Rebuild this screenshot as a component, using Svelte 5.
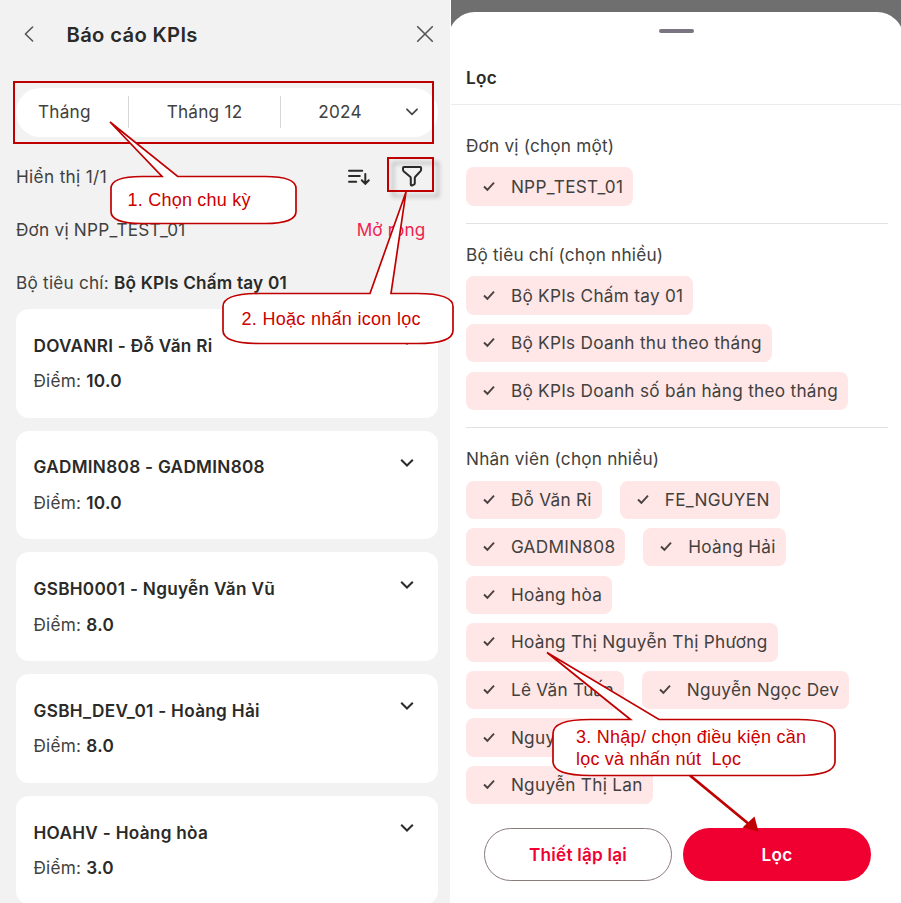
<script>
  const cards = [
    { name: 'DOVANRI - Đỗ Văn Ri', score: '10.0' },
    { name: 'GADMIN808 - GADMIN808', score: '10.0' },
    { name: 'GSBH0001 - Nguyễn Văn Vũ', score: '8.0' },
    { name: 'GSBH_DEV_01 - Hoàng Hải', score: '8.0' },
    { name: 'HOAHV - Hoàng hòa', score: '3.0' }
  ];

  const sections = [
    { title: 'Đơn vị (chọn một)', rows: [['NPP_TEST_01']] },
    {
      title: 'Bộ tiêu chí (chọn nhiều)',
      rows: [['Bộ KPIs Chấm tay 01'], ['Bộ KPIs Doanh thu theo tháng'], ['Bộ KPIs Doanh số bán hàng theo tháng']]
    },
    {
      title: 'Nhân viên (chọn nhiều)',
      rows: [
        ['Đỗ Văn Ri', 'FE_NGUYEN'],
        ['GADMIN808', 'Hoàng Hải'],
        ['Hoàng hòa'],
        ['Hoàng Thị Nguyễn Thị Phương'],
        ['Lê Văn Tuấn', 'Nguyễn Ngọc Dev'],
        ['Nguyễn'],
        ['Nguyễn Thị Lan']
      ]
    }
  ];
</script>

<div class="page">
  <section class="report">
    <header class="topbar">
      <svg width="12" height="18" viewBox="0 0 12 18"><path d="M9.6 2 2.4 9l7.2 7" /></svg>
      <h1>Báo cáo KPIs</h1>
      <svg width="18" height="18" viewBox="0 0 18 18"><path d="m1.7 1.7 14.6 14.6M16.3 1.7 1.7 16.3" /></svg>
    </header>

    <div class="period">
      <span class="type">Tháng</span>
      <span class="month">Tháng 12</span>
      <span class="year">2024</span>
      <svg width="12" height="8" viewBox="0 0 12 8"><path d="m1 1.3 5 5 5-5" /></svg>
    </div>

    <div class="row count">
      <span>Hiển thị 1/1</span>
      <div class="tools">
        <svg width="24" height="20" viewBox="0 0 24 20">
          <path d="M2 3.7h13.2M2 9.100h10.800M2 14.700h7.200M18.3 7v9.600M14.800 13.200l3.500 3.700 3.500-3.700" />
        </svg>
        <svg width="22" height="22" viewBox="0 0 22 22">
          <path d="M2.9 1h16.2q1 0 1 1v1.500q0 .9-.6 1.600l-5.200 5.600q-.5.6-.5 1.400v5.200q0 .7-.6 1l-1.900 1q-1.500.6-1.500-.9v-6.200q0-.8-.6-1.500L2.600 5.200Q2 4.500 2 3.600V2q0-1 .9-1z" />
        </svg>
      </div>
    </div>
    <div class="row unit"><span>Đơn vị NPP_TEST_01</span><a>Mở rộng</a></div>
    <div class="row set"><span>Bộ tiêu chí: <b>Bộ KPIs Chấm tay 01</b></span></div>

    <div class="cards">
      {#each cards as card}
        <article>
          <div class="lines">
            <h2>{card.name}</h2>
            <p>Điểm: <b>{card.score}</b></p>
          </div>
          <svg width="14" height="10" viewBox="0 0 14 10"><path d="m1.2 1.7 5.8 5.800 5.800-5.800" /></svg>
        </article>
      {/each}
    </div>
  </section>

  <section class="filter">
    <div class="sheet">
      <div class="grip"></div>
      <h3>Lọc</h3>
      <div class="groups">
        {#each sections as s}
          <div class="group">
            <h4>{s.title}</h4>
            {#each s.rows as row}
              <div class="chips">
                {#each row as label}
                  <span class="chip">
                    <svg width="12" height="10" viewBox="0 0 12 10"><path d="m1 4.500 3.400 3.300L11 .7" /></svg>{label}
                  </span>
                {/each}
              </div>
            {/each}
          </div>
        {/each}
      </div>
      <footer>
        <button class="reset">Thiết lập lại</button>
        <button class="apply">Lọc</button>
      </footer>
    </div>
  </section>

  <svg class="notes" width="901" height="903" viewBox="0 0 901 903">
    <defs>
      <filter id="shade" x="-30%" y="-30%" width="180%" height="180%">
        <feDropShadow dx="5" dy="5" stdDeviation="2" flood-color="#000" flood-opacity="0.28" />
      </filter>
    </defs>
    <rect class="frame" x="14" y="82" width="419" height="61" />
    <rect class="frame" x="388" y="158" width="45" height="33" filter="url(#shade)" />
    <path class="bubble" d="M142 176.500H162L110 122l67.700 54.500H265q31 0 31 12V211.500q0 12-31 12H142q-31 0-31-12V188.500q0-12 31-12z" />
    <path class="bubble" d="M259 293.500H370L406 192 391 293.500H417q36 0 36 13V330.500q0 13-36 13H259q-36 0-36-13V306.500q0-13 36-13z" />
    <path class="bubble" d="M590 719.500H630.500L547 652.500 659 719.500H798q37 0 37 14V761.500q0 14-37 14H590q-37 0-37-14V733.500q0-14 37-14z" />
    <path class="arrow" d="M690 775.500 750 825" />
    <path class="head" d="M754.500 816.500 758.500 831.500 742.500 827.500z" />
    <text x="127.500" y="206" textLength="123">1. Chọn chu kỳ</text>
    <text x="241.500" y="325" textLength="179">2. Hoặc nhấn icon lọc</text>
    <text x="576" y="743" textLength="230">3. Nhập/ chọn điều kiện cần</text>
    <text x="576" y="765" textLength="165" xml:space="preserve">lọc và nhấn nút&nbsp; Lọc</text>
  </svg>
</div>

<style>
  * { box-sizing: border-box; }
  h1, h2, h3, h4, p { margin: 0; }
  .page {
    position: relative;
    display: flex;
    gap: 1px;
    width: 901px;
    height: 903px;
    overflow: hidden;
    background: #fff;
    color: #41413e;
    font: 400 17.2px/24px Inter, sans-serif;
    letter-spacing: 0.22px;
  }
  svg { flex: none; fill: none; stroke: #2b2b29; stroke-width: 2; stroke-linecap: round; stroke-linejoin: round; }
  b, h1, h2, h3 { color: #2a2a28; font-weight: 600; letter-spacing: 0.26px; }
  .report { width: 450px; height: 903px; background: #f2f2f2; padding: 0 12px 0 16px; overflow: hidden; }

  .topbar { display: flex; align-items: center; height: 68px; padding: 0 0 0 7px; margin-bottom: 19.500px; }
  .topbar svg { stroke: #555; stroke-width: 1.6; }
  .topbar h1 { flex: 1; margin-left: 31.500px; padding-top: 1px; font-size: 20.200px; letter-spacing: 0.350px; }
  .topbar svg:last-child { margin-right: 4px; }

  .period { display: flex; align-items: center; height: 49px; border-radius: 25px; background: #fff; }
  .period span { height: 32px; line-height: 32px; }
  .type { width: 113px; padding-left: 22px; border-right: 1px solid #d6d6d6; }
  .month { width: 152px; text-align: center; border-right: 1px solid #d6d6d6; }
  .year { width: 118px; text-align: center; }
  .period svg { margin: 0 0 0 6.500px; stroke: #4a4a4a; stroke-width: 1.800; }

  .row { display: flex; align-items: center; justify-content: space-between; height: 53px; }
  .count { margin-top: 14px; }
  .count span { letter-spacing: 0.340px; }
  .tools { display: flex; align-items: center; gap: 30px; padding-right: 15.500px; }
  .row a { color: #f0234f; padding-right: 12.500px; letter-spacing: 0.150px; }
  .set b { letter-spacing: 0.180px; }
  .cards { display: flex; flex-direction: column; gap: 13.300px; width: 422px; margin-top: -0.400px; }
  article { display: flex; justify-content: space-between; flex: none; height: 108.400px; padding: 24.700px 24px 0 17.500px; border-radius: 13px; background: #fff; }
  article h2 { font-size: inherit; line-height: 24px; letter-spacing: 0.290px; }
  article p { margin-top: 11.600px; }
  article svg { margin-top: 2.500px; stroke-linecap: butt; stroke-linejoin: miter; }

  .filter { flex: none; width: 450px; height: 903px; background: #6f6f6f; padding-top: 11.500px; overflow: hidden; }
  .sheet { display: flex; flex-direction: column; height: 892px; width: 456px; margin-left: -3px; padding: 0 3px; border-radius: 27px 27px 0 0; background: #fff; }
  .grip { flex: none; width: 35px; height: 4.500px; margin: 17.300px auto 0; border-radius: 3px; background: #7a7580; }
  h3 { flex: none; height: 72px; padding: 33px 0 0 15px; border-bottom: 1.500px solid #ececec; font-size: 17.200px; }
  .groups { padding: 0 13px 0 15px; }
  .group { padding: 18.500px 0 17.400px; border-bottom: 1px solid #e2e2e2; }
  .group:first-child { padding-top: 28.300px; }
  .group:last-child { border: 0; padding-bottom: 0; }
  h4 { height: 33.900px; font-size: 17.200px; font-weight: 400; letter-spacing: 0.200px; }
  .chips { display: flex; gap: 18px; margin-bottom: 9.400px; }
  .chips:last-child { margin-bottom: 0; }
  .chip { display: flex; align-items: center; height: 38.200px; padding: 0 10px 0 17px; border-radius: 8px; background: #ffe6e7; letter-spacing: 0.280px; white-space: nowrap; }
  .chip svg { margin-right: 15.900px; stroke: #4b4243; stroke-width: 1.900; stroke-linecap: butt; stroke-linejoin: miter; }
  footer { display: flex; gap: 11px; margin: auto 0 22.800px; padding-left: 32.500px; }
  button { width: 188px; height: 53px; padding: 1px 0 0 1px; border-radius: 27px; font: 600 17.200px/24px Inter, sans-serif; letter-spacing: 0.200px; }
  .reset { border: 1.200px solid #8a7b7b; background: #fff; color: #f00030; }
  .apply { border: 0; background: #f00030; color: #fff; }

  .notes { position: absolute; left: 0; top: 0; stroke: none; }
  .frame { stroke: #c00000; stroke-width: 2; stroke-linejoin: miter; }
  .bubble { fill: #fff; stroke: #c00000; stroke-width: 1.700; stroke-linejoin: miter; }
  .arrow { stroke: #c00000; stroke-width: 2.800; stroke-linecap: butt; }
  .head { fill: #c00000; stroke: none; }
  .notes text { fill: #cc0000; stroke: none; font: 400 18px "Liberation Sans", Arial, sans-serif; letter-spacing: 0; }
</style>
